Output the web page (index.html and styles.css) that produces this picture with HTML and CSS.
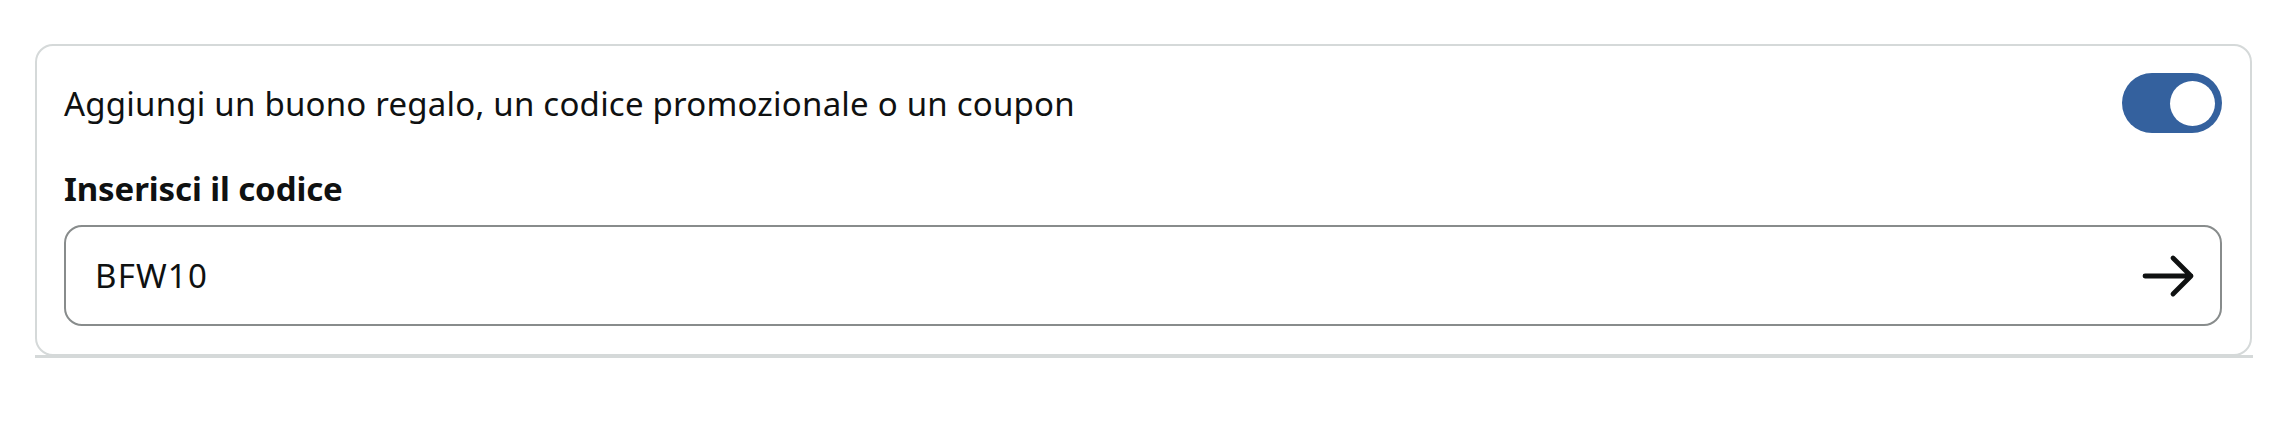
FILE: index.html
```html
<!DOCTYPE html>
<html lang="it">
<head>
<meta charset="utf-8">
<title>Codice promozionale</title>
<link rel="stylesheet" href="styles.css">
</head>
<body>
<div class="wrap">
  <section class="card">
    <div class="row">
      <span class="title">Aggiungi un buono regalo, un codice promozionale o un coupon</span>
      <span class="toggle" role="switch" aria-checked="true"><span class="knob"></span></span>
    </div>
    <div class="label">Inserisci il codice</div>
    <div class="field">
      <span class="value">BFW10</span>
      <svg class="arrow" width="54" height="44" viewBox="0 0 54 44" aria-hidden="true">
        <path d="M3 22 H49 M31 4 L49 22 L31 40" fill="none" stroke="#0f1111" stroke-width="4.8" stroke-linecap="round" stroke-linejoin="round"/>
      </svg>
    </div>
  </section>
</div>
</body>
</html>
```

FILE: styles.css
```css
html, body {
  margin: 0;
  padding: 0;
  background: #ffffff;
}

body {
  font-family: "Noto Sans", "Open Sans", "Liberation Sans", sans-serif;
  color: #0f1111;
}

.wrap {
  margin: 44px 0 0 35px;
  width: 2218px;
  border-bottom: 3px solid #d5d9d9;
}

.card {
  box-sizing: border-box;
  width: 2217px;
  border: 2px solid #d5d9d9;
  border-radius: 18px;
  padding: 27px 28px 28px 27px;
  margin-bottom: -1px;
}

.row {
  display: flex;
  align-items: center;
  justify-content: space-between;
  height: 60px;
}

.title {
  font-size: 33px;
  line-height: 40px;
  margin-top: 2px;
  letter-spacing: 0.22px;
}

.toggle {
  position: relative;
  width: 100px;
  height: 60px;
  border-radius: 30px;
  background: #34619e;
  flex: none;
}

.knob {
  position: absolute;
  right: 7px;
  top: 7.5px;
  width: 45px;
  height: 45px;
  border-radius: 50%;
  background: #ffffff;
}

.label {
  margin-top: 36px;
  font-size: 33px;
  line-height: 40px;
  font-weight: 700;
  letter-spacing: -0.1px;
}

.field {
  box-sizing: border-box;
  margin-top: 16px;
  height: 101px;
  border: 2px solid #888c8c;
  border-radius: 18px;
  display: flex;
  align-items: center;
  justify-content: space-between;
  padding: 0 24px 0 29px;
}

.value {
  font-size: 33px;
  line-height: 40px;
  letter-spacing: 1.2px;
}

.arrow {
  display: block;
  flex: none;
}
```
